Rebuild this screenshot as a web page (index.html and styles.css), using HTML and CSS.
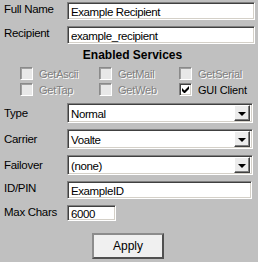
FILE: index.html
```html
<!DOCTYPE html>
<html lang="en">
<head>
  <meta charset="UTF-8">
  <title>Recipient</title>
  <link rel="stylesheet" href="styles.css">
</head>
<body>
  <div class="panel">
    <!-- Name fields -->
    <div class="row">
      <label class="lbl">Full Name</label>
      <input class="edit full" type="text" value="Example Recipient">
    </div>
    <div class="row">
      <label class="lbl">Recipient</label>
      <input class="edit full" type="text" value="example_recipient">
    </div>

    <!-- Services -->
    <div class="heading">Enabled Services</div>
    <div class="services">
      <div class="svc off"><span class="box"></span>GetAscii</div>
      <div class="svc off"><span class="box"></span>GetMail</div>
      <div class="svc off"><span class="box"></span>GetSerial</div>
      <div class="svc off"><span class="box"></span>GetTap</div>
      <div class="svc off"><span class="box"></span>GetWeb</div>
      <div class="svc"><span class="box checked">
        <svg width="7" height="7" viewBox="0 0 7 7"><path d="M0 2v3l2 2h1l4-4V0L2.5 4.5z" fill="#000"/></svg>
      </span>GUI Client</div>
    </div>

    <!-- Dropdowns -->
    <div class="row sel-row">
      <label class="lbl">Type</label>
      <div class="combo"><span class="val">Normal</span><span class="drop"><i class="tri"></i></span></div>
    </div>
    <div class="row sel-row">
      <label class="lbl">Carrier</label>
      <div class="combo"><span class="val">Voalte</span><span class="drop"><i class="tri"></i></span></div>
    </div>
    <div class="row sel-row">
      <label class="lbl">Failover</label>
      <div class="combo"><span class="val">(none)</span><span class="drop"><i class="tri"></i></span></div>
    </div>

    <div class="row">
      <label class="lbl">ID/PIN</label>
      <input class="edit pin" type="text" value="ExampleID">
    </div>
    <div class="row">
      <label class="lbl">Max Chars</label>
      <input class="edit small" type="text" value="6000">
    </div>

    <div class="actions">
      <button class="btn">Apply</button>
    </div>
  </div>
</body>
</html>
```

FILE: styles.css
```css
body {
  margin: 0;
  background-color: #c0c0c0;
  font-family: "Liberation Sans", Arial, sans-serif;
  font-size: 11px;
  color: #000;
}

.panel {
  width: 258px;
  height: 262px;
  padding: 2px 0 0 4px;
  box-sizing: border-box;
  display: flex;
  flex-direction: column;
}

.row {
  display: flex;
  align-items: flex-start;
  margin-bottom: 6px;
}

.lbl {
  width: 63px;
  flex: none;
  padding-top: 1px;
  font-size: 11.5px;
  letter-spacing: -0.3px;
}

.edit {
  height: 18px;
  box-sizing: border-box;
  margin: 0;
  padding: 1px 2px 0 3px;
  font-family: "Liberation Sans", Arial, sans-serif;
  font-size: 11.5px;
  letter-spacing: -0.4px;
  color: #000;
  background: #fff;
  border: 1px solid;
  border-color: #808080 #fff #fff #808080;
  box-shadow: inset 1px 1px #404040, inset -1px -1px #d4d0c8;
  outline: none;
}

.full {
  width: 188px;
}

.pin {
  width: 185px;
}

.small {
  width: 49px;
  height: 16px;
}

.heading {
  font-weight: bold;
  font-size: 12px;
  text-align: center;
  padding-left: 3px;
  margin: -2px 0 0;
  height: 19px;
}

.services {
  display: grid;
  grid-template-columns: 79px 80px auto;
  row-gap: 3px;
  padding-left: 16px;
  margin-bottom: 7px;
}

.svc {
  display: flex;
  align-items: center;
  height: 13px;
  letter-spacing: -0.2px;
}

.svc.off {
  color: #808080;
  text-shadow: 1px 1px 0 #fff;
}

.box {
  width: 13px;
  height: 13px;
  box-sizing: border-box;
  margin-right: 6px;
  border: 1px solid;
  border-color: #808080 #fff #fff #808080;
  box-shadow: inset 1px 1px #404040, inset -1px -1px #d4d0c8;
  background: #fff;
  display: flex;
  align-items: center;
  justify-content: center;
}

.svc.off .box {
  background: #e8e8e8;
  border-color: #8a8a8a #fff #fff #8a8a8a;
  box-shadow: inset 1px 1px #a0a0a0;
}

.sel-row .lbl {
  padding-top: 4px;
}

.combo {
  width: 186px;
  height: 20px;
  box-sizing: border-box;
  background: #fff;
  border: 1px solid;
  border-color: #808080 #fff #fff #808080;
  box-shadow: inset 1px 1px #404040, inset -1px -1px #d4d0c8;
  display: flex;
  align-items: center;
  justify-content: space-between;
  padding: 0 2px 0 3px;
  font-size: 11.5px;
  letter-spacing: -0.4px;
}

.val {
  padding-top: 1px;
}

.drop {
  width: 16px;
  height: 16px;
  box-sizing: border-box;
  background: #ececec;
  border: 1px solid;
  border-color: #fff #404040 #404040 #fff;
  box-shadow: inset -1px -1px #808080;
  display: flex;
  align-items: center;
  justify-content: center;
}

.tri {
  width: 0;
  height: 0;
  border-left: 4px solid transparent;
  border-right: 4px solid transparent;
  border-top: 4px solid #000;
  margin-top: 1px;
}

.actions {
  display: flex;
  padding-left: 88px;
  margin-top: 6px;
}

.btn {
  width: 72px;
  height: 26px;
  background: #f0f0f0;
  font-family: "Liberation Sans", Arial, sans-serif;
  font-size: 12px;
  color: #000;
  border: 2px solid;
  border-color: #8c8c8c #505050 #505050 #8c8c8c;
  padding: 0;
}
```
